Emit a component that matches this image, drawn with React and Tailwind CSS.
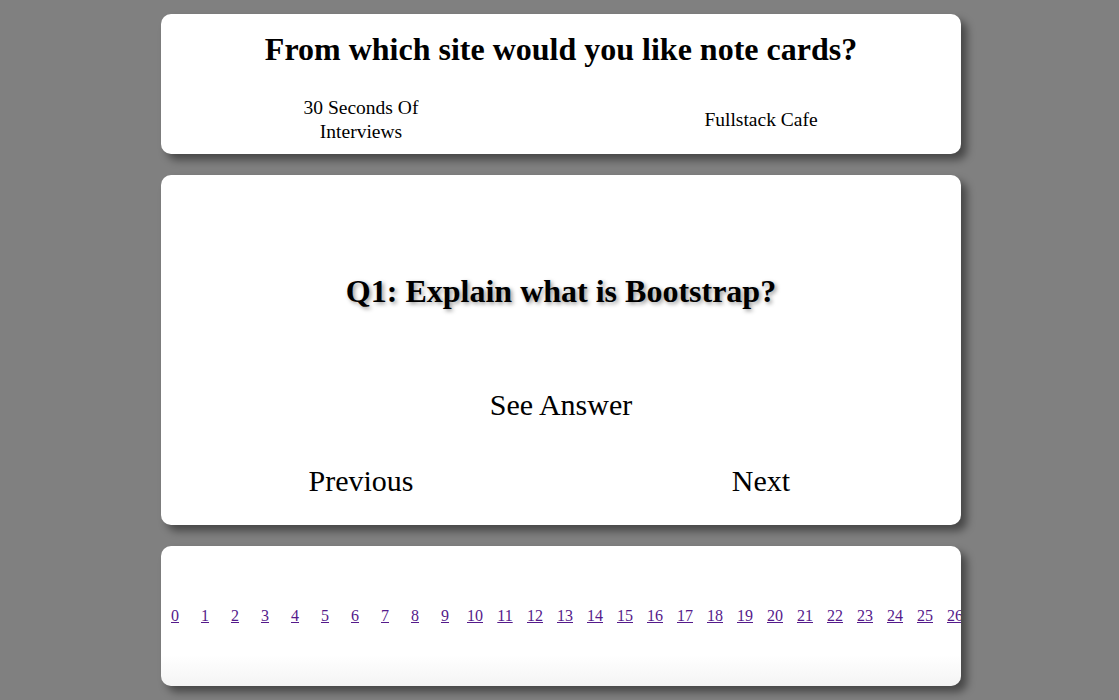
import React, { useState } from 'react'

const sites = ['30 Seconds Of Interviews', 'Fullstack Cafe']
const cardShadow = 'shadow-[6px_6px_8px_rgba(0,0,0,0.45)]'

export default function App() {
  const [index, setIndex] = useState(0)

  return (
    <div className="min-h-screen w-full bg-[#808080] pt-[14px] pb-[14px] pl-[3px] font-['Liberation_Serif','Times_New_Roman',serif] text-black">
      <div className="mx-auto flex w-[800px] flex-col gap-[21px]">
        {/* site picker */}
        <div className={`h-[140px] rounded-[10px] bg-white pt-[17px] ${cardShadow}`}>
          <h2 className="text-center text-[32px] font-bold leading-[37px]">From which site would you like note cards?</h2>
          <div className="mt-[24px] grid grid-cols-2">
            {sites.map((site) => (
              <div key={site} className="flex h-[56px] items-center justify-center">
                <button type="button" className="w-[140px] text-center text-[19.5px] leading-[24px]">
                  {site}
                </button>
              </div>
            ))}
          </div>
        </div>

        {/* question card */}
        <div className={`flex h-[350px] flex-col rounded-[10px] bg-white ${cardShadow} [text-shadow:2px_2px_4px_rgba(0,0,0,0.4)]`}>
          <h2 className="mt-[98px] text-center text-[32px] font-bold leading-[37px]">Q1: Explain what is Bootstrap?</h2>
          <button type="button" className="mx-auto mt-[78px] text-[30px] leading-[34px]">See Answer</button>
          <div className="mt-[42px] grid grid-cols-2">
            <div className="flex justify-center">
              <button type="button" className="text-[30px] leading-[34px]" onClick={() => setIndex(Math.max(0, index - 1))}>Previous</button>
            </div>
            <div className="flex justify-center">
              <button type="button" className="text-[30px] leading-[34px]" onClick={() => setIndex(index + 1)}>Next</button>
            </div>
          </div>
        </div>

        {/* question index */}
        <div className={`flex h-[140px] items-center overflow-hidden rounded-[10px] bg-[linear-gradient(to_bottom,#ffffff_78%,#f4f4f4)] ${cardShadow}`}>
          <div className="-ml-px flex">
            {Array.from({ length: 27 }, (_, i) => (
              <a key={i} href={`#${i}`} className="w-[30px] shrink-0 text-center text-[16px] leading-[20px] text-[#551a8b] underline">
                {i}
              </a>
            ))}
          </div>
        </div>
      </div>
    </div>
  )
}
